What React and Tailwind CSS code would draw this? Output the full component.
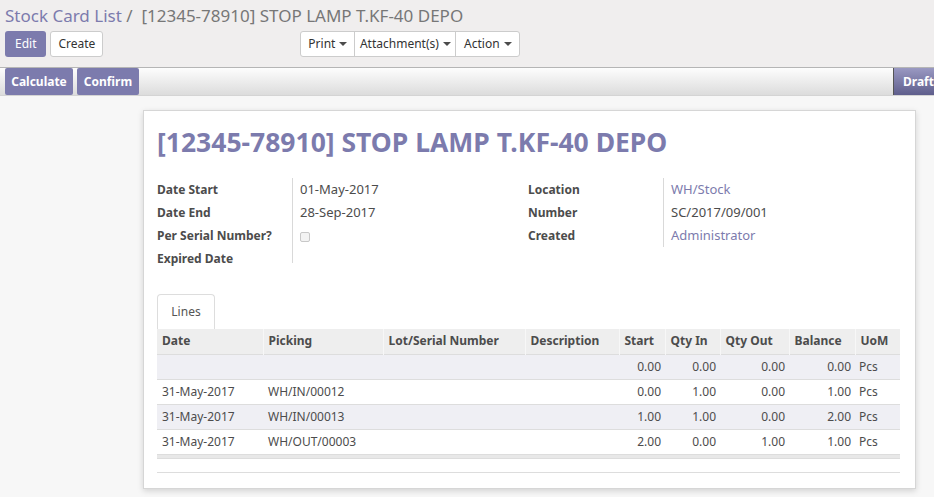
import React from "react";

const rows = [
  { date: "", picking: "", start: "0.00", qin: "0.00", qout: "0.00", bal: "0.00" },
  { date: "31-May-2017", picking: "WH/IN/00012", start: "0.00", qin: "1.00", qout: "0.00", bal: "1.00" },
  { date: "31-May-2017", picking: "WH/IN/00013", start: "1.00", qin: "1.00", qout: "0.00", bal: "2.00" },
  { date: "31-May-2017", picking: "WH/OUT/00003", start: "2.00", qin: "0.00", qout: "1.00", bal: "1.00" },
];

function Caret() {
  return <span className="inline-block ml-[4px] align-middle w-0 h-0 border-l-[4px] border-r-[4px] border-t-[4px] border-l-transparent border-r-transparent border-t-[#4c4c4c]" />;
}

function Field({ label, children }) {
  return (
    <div className="flex h-[23px] items-center">
      <div className="w-[135px] font-bold text-[12px] text-[#4c4c4c]">{label}</div>
      <div className="pl-[7px] border-l border-[#d9d9d9] h-full flex items-center">{children}</div>
    </div>
  );
}

export default function App() {
  return (
    <div className="w-[934px] h-[497px] overflow-hidden bg-[#f7f7f7] text-[13px] text-[#4c4c4c]" style={{ fontFamily: "'Noto Sans', 'DejaVu Sans', sans-serif" }}>
      {/* control panel */}
      <div className="h-[68px] bg-[#f0eeee] border-b border-[#b5b5b5] px-[5px] pt-[3px]">
        <div className="text-[17px] leading-[26px] whitespace-nowrap">
          <span className="text-[#7c7bad]">Stock Card List</span>
          <span className="text-[#777]"> /&nbsp; [12345-78910] STOP LAMP T.KF-40 DEPO</span>
        </div>
        <div className="flex mt-[2px] h-[26px]">
          <button className="h-[26px] px-[10px] bg-[#7c7bad] text-white text-[12px] rounded-[3px]">Edit</button>
          <button className="h-[26px] px-[7px] ml-[4px] bg-white border border-[#ccc] text-[12px] text-[#333] rounded-[3px]">Create</button>
          <div className="ml-[197px] flex h-[26px] bg-white border border-[#ccc] rounded-[3px] text-[12px] text-[#333]">
            <div className="w-[54px] flex items-center justify-center border-r border-[#ccc]">Print<Caret /></div>
            <div className="w-[101px] flex items-center justify-center border-r border-[#ccc]">Attachment(s)<Caret /></div>
            <div className="w-[63px] flex items-center justify-center">Action<Caret /></div>
          </div>
        </div>
      </div>

      {/* statusbar */}
      <div className="h-[28px] flex bg-gradient-to-b from-[#fdfdfd] to-[#dcdcdc] border-b border-[#d4d4d4] pl-[5px]">
        <button className="h-[27px] w-[68px] bg-[#7c7bad] text-white text-[12px] font-bold rounded-[2px] whitespace-nowrap">Calculate</button>
        <button className="h-[27px] w-[62px] ml-[4px] bg-[#7c7bad] text-white text-[12px] font-bold rounded-[2px]">Confirm</button>
        <div className="flex-1" />
        <div className="h-[27px] w-[41px] pl-[9px] flex items-center bg-gradient-to-b from-[#9a99c2] to-[#5f5e8c] border-l border-[#555] text-white text-[12px] font-bold overflow-hidden whitespace-nowrap">Draft</div>
      </div>

      {/* sheet */}
      <div className="pt-[14px]">
        <div className="ml-[143px] w-[773px] h-[379px] bg-white border border-[#d6d6d6] shadow-[0_2px_6px_rgba(0,0,0,0.15)] px-[13px] pt-[15px]">
          <h1 className="text-[26.5px] leading-[32px] font-bold text-[#7c7bad] whitespace-nowrap">[12345-78910] STOP LAMP T.KF-40 DEPO</h1>

          <div className="flex mt-[20px]">
            <div className="w-[371px]">
              <Field label="Date Start">01-May-2017</Field>
              <Field label="Date End">28-Sep-2017</Field>
              <Field label="Per Serial Number?">
                <span className="inline-block w-[10px] h-[10px] mt-[2px] border border-[#c8c8c8] bg-[#f3f3f3] rounded-[2px]" />
              </Field>
              <div className="flex h-[23px] items-center">
                <div className="w-[135px] font-bold text-[12px]">Expired Date</div>
                <div className="border-l border-[#d9d9d9] h-[16px] self-start" />
              </div>
            </div>
            <div className="flex-1">
              <Field label="Location"><span className="text-[#7c7bad]">WH/Stock</span></Field>
              <Field label="Number">SC/2017/09/001</Field>
              <Field label="Created"><span className="text-[#7c7bad]">Administrator</span></Field>
            </div>
          </div>

          {/* tabs */}
          <div className="mt-[24px] flex">
            <div className="h-[35px] w-[58px] flex items-center justify-center border border-b-0 border-[#ddd] rounded-t-[4px] text-[12px] text-[#555]">Lines</div>
          </div>

          <table className="w-[743px] border-collapse table-fixed text-[12px]">
            <colgroup>
              <col className="w-[106px]" />
              <col className="w-[120px]" />
              <col className="w-[142px]" />
              <col className="w-[94px]" />
              <col className="w-[46px]" />
              <col className="w-[55px]" />
              <col className="w-[69px]" />
              <col className="w-[66px]" />
              <col className="w-[45px]" />
            </colgroup>
            <thead>
              <tr className="h-[25px] bg-[#eee] text-left font-bold">
                {["Date", "Picking", "Lot/Serial Number", "Description", "Start", "Qty In", "Qty Out", "Balance", "UoM"].map((h) => (
                  <th key={h} className="px-[5px] font-bold border-l border-[#f7f7f7] first:border-l-0 whitespace-nowrap overflow-hidden">{h}</th>
                ))}
              </tr>
            </thead>
            <tbody>
              {rows.map((r, i) => (
                <tr key={i} className={"h-[25px] border-t border-[#ddd] " + (i % 2 === 0 ? "bg-[#efeff4]" : "bg-white")}>
                  <td className="px-[5px] whitespace-nowrap">{r.date}</td>
                  <td className="px-[5px] whitespace-nowrap">{r.picking}</td>
                  <td className="px-[5px]"></td>
                  <td className="px-[5px]"></td>
                  <td className="px-[4px] text-right">{r.start}</td>
                  <td className="px-[4px] text-right">{r.qin}</td>
                  <td className="px-[4px] text-right">{r.qout}</td>
                  <td className="px-[4px] text-right">{r.bal}</td>
                  <td className="px-[4px]">Pcs</td>
                </tr>
              ))}
            </tbody>
          </table>
          <div className="w-[743px] h-[5px] bg-[#e8e8e8] border-t border-[#ddd] border-b border-[#c8c8c8]" />
          <div className="w-[743px] h-[14px] border-b border-[#ddd]" />
        </div>
      </div>
    </div>
  );
}
